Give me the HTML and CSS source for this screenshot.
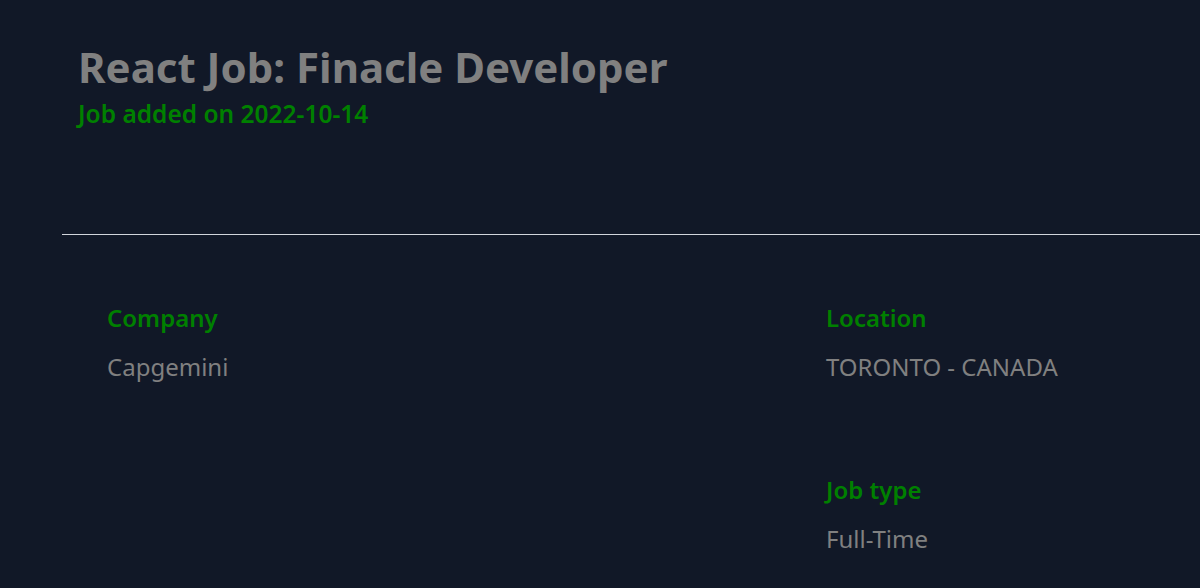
FILE: index.html
```html
<!DOCTYPE html>
<html lang="en">

<head>
    <meta charset="UTF-8">
    <meta name="viewport" content="width=device-width, initial-scale=1.0">
    <link rel="stylesheet" href="styles.css">
    <title>Job details</title>
</head>

<body>
    <div class="job">
        <div class="job-head">
            <h1>React Job: Finacle Developer</h1>
            <p class="added">Job added on 2022-10-14</p>
        </div>
        <hr>
        <div class="details">
            <div class="item">
                <h3>Company</h3>
                <p>Capgemini</p>
            </div>
            <div class="item">
                <h3>Location</h3>
                <p>TORONTO - CANADA</p>
            </div>
            <div class="item"></div>
            <div class="item">
                <h3>Job type</h3>
                <p>Full-Time</p>
            </div>
        </div>
    </div>
</body>

</html>
```

FILE: styles.css
```css
* {
    margin: 0;
    padding: 0;
    box-sizing: border-box;
}

body {
    background-color: #111827;
    font-family: 'Noto Sans', 'Open Sans', sans-serif;
    color: gray;
    overflow: hidden;
}

.job {
    padding: 40px 0 0 62px;
}

.job-head {
    padding-left: 16px;
    height: 194px;

    h1 {
        font-size: 42px;
        font-weight: 700;
        line-height: 54px;
    }

    .added {
        color: green;
        font-size: 24.5px;
        font-weight: 600;
        line-height: 32px;
        margin-top: 4px;
    }
}

hr {
    border: none;
    border-top: 1px solid #d1d5db;
}

.details {
    display: grid;
    grid-template-columns: 719px auto;
    row-gap: 91px;
    padding: 67px 0 0 45px;

    h3 {
        color: green;
        font-size: 24px;
        font-weight: 600;
        line-height: 32px;
        margin-bottom: 17px;
    }

    p {
        font-size: 24px;
        line-height: 32px;
    }
}
```
